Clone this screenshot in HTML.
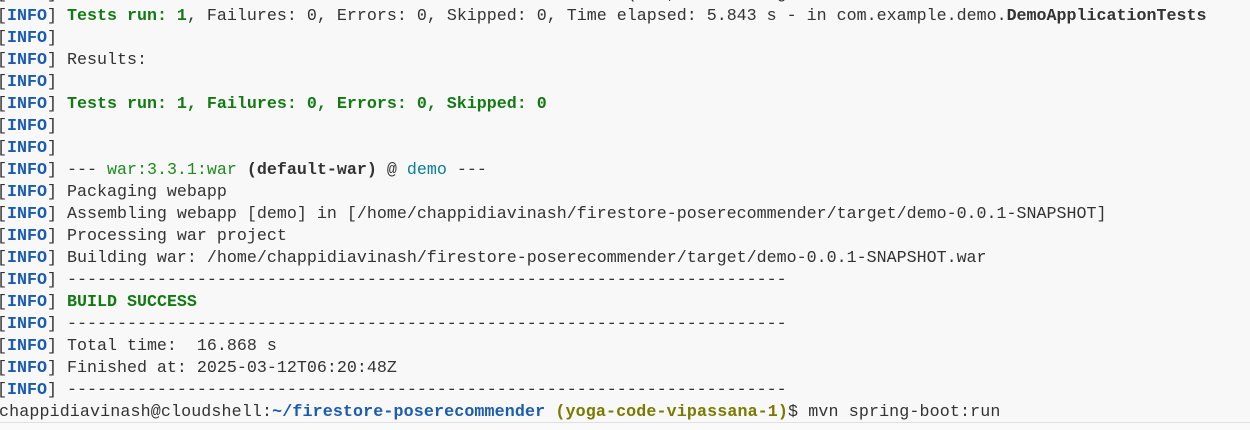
<!DOCTYPE html>
<html><head><meta charset="utf-8"><style>
html,body{margin:0;padding:0;}
body{width:1250px;height:430px;overflow:hidden;background:#f8f8f8;position:relative;font-family:"Liberation Mono","DejaVu Sans Mono",monospace;font-size:16.67px;color:#333;}
.l{position:absolute;left:-3px;height:22px;line-height:22px;white-space:pre;}
.i{color:#1b5bb0;font-weight:bold;}
.g{color:#127a12;font-weight:bold;}
.gn{color:#1d8a1d;}
.b{font-weight:bold;color:#333;}
.c{color:#0a7d98;}
.bl{color:#1b5bb0;font-weight:bold;}
.y{color:#7a7a00;font-weight:bold;}
.sep{position:absolute;left:0;top:422px;width:1250px;height:1px;background:#e0e0e0;}
.low{position:absolute;left:0;top:423px;width:1250px;height:7px;background:#fafafa;}
</style></head><body>
<div class="l" style="top:-16px">[<span class="i">INFO</span>] ------------------------------------------------------- (   ,          g</div>
<div class="l" style="top:6px">[<span class="i">INFO</span>] <span class="g">Tests run: 1</span>, Failures: 0, Errors: 0, Skipped: 0, Time elapsed: 5.843 s - in com.example.demo.<span class="b">DemoApplicationTests</span></div>
<div class="l" style="top:28px">[<span class="i">INFO</span>]</div>
<div class="l" style="top:50px">[<span class="i">INFO</span>] Results:</div>
<div class="l" style="top:72px">[<span class="i">INFO</span>]</div>
<div class="l" style="top:94px">[<span class="i">INFO</span>] <span class="g">Tests run: 1, Failures: 0, Errors: 0, Skipped: 0</span></div>
<div class="l" style="top:116px">[<span class="i">INFO</span>]</div>
<div class="l" style="top:138px">[<span class="i">INFO</span>]</div>
<div class="l" style="top:160px">[<span class="i">INFO</span>] --- <span class="gn">war:3.3.1:war</span> <span class="b">(default-war)</span> @ <span class="c">demo</span> ---</div>
<div class="l" style="top:182px">[<span class="i">INFO</span>] Packaging webapp</div>
<div class="l" style="top:204px">[<span class="i">INFO</span>] Assembling webapp [demo] in [/home/chappidiavinash/firestore-poserecommender/target/demo-0.0.1-SNAPSHOT]</div>
<div class="l" style="top:226px">[<span class="i">INFO</span>] Processing war project</div>
<div class="l" style="top:248px">[<span class="i">INFO</span>] Building war: /home/chappidiavinash/firestore-poserecommender/target/demo-0.0.1-SNAPSHOT.war</div>
<div class="l" style="top:270px">[<span class="i">INFO</span>] ------------------------------------------------------------------------</div>
<div class="l" style="top:292px">[<span class="i">INFO</span>] <span class="g">BUILD SUCCESS</span></div>
<div class="l" style="top:314px">[<span class="i">INFO</span>] ------------------------------------------------------------------------</div>
<div class="l" style="top:336px">[<span class="i">INFO</span>] Total time:  16.868 s</div>
<div class="l" style="top:358px">[<span class="i">INFO</span>] Finished at: 2025-03-12T06:20:48Z</div>
<div class="l" style="top:380px">[<span class="i">INFO</span>] ------------------------------------------------------------------------</div>
<div class="l" style="top:402px;left:-1px;letter-spacing:0.12px">chappidiavinash@cloudshell:<span class="bl">~/firestore-poserecommender</span> <span class="y">(yoga-code-vipassana-1)</span>$ mvn spring-boot:run</div>
<div class="sep"></div><div class="low"></div>
</body></html>
